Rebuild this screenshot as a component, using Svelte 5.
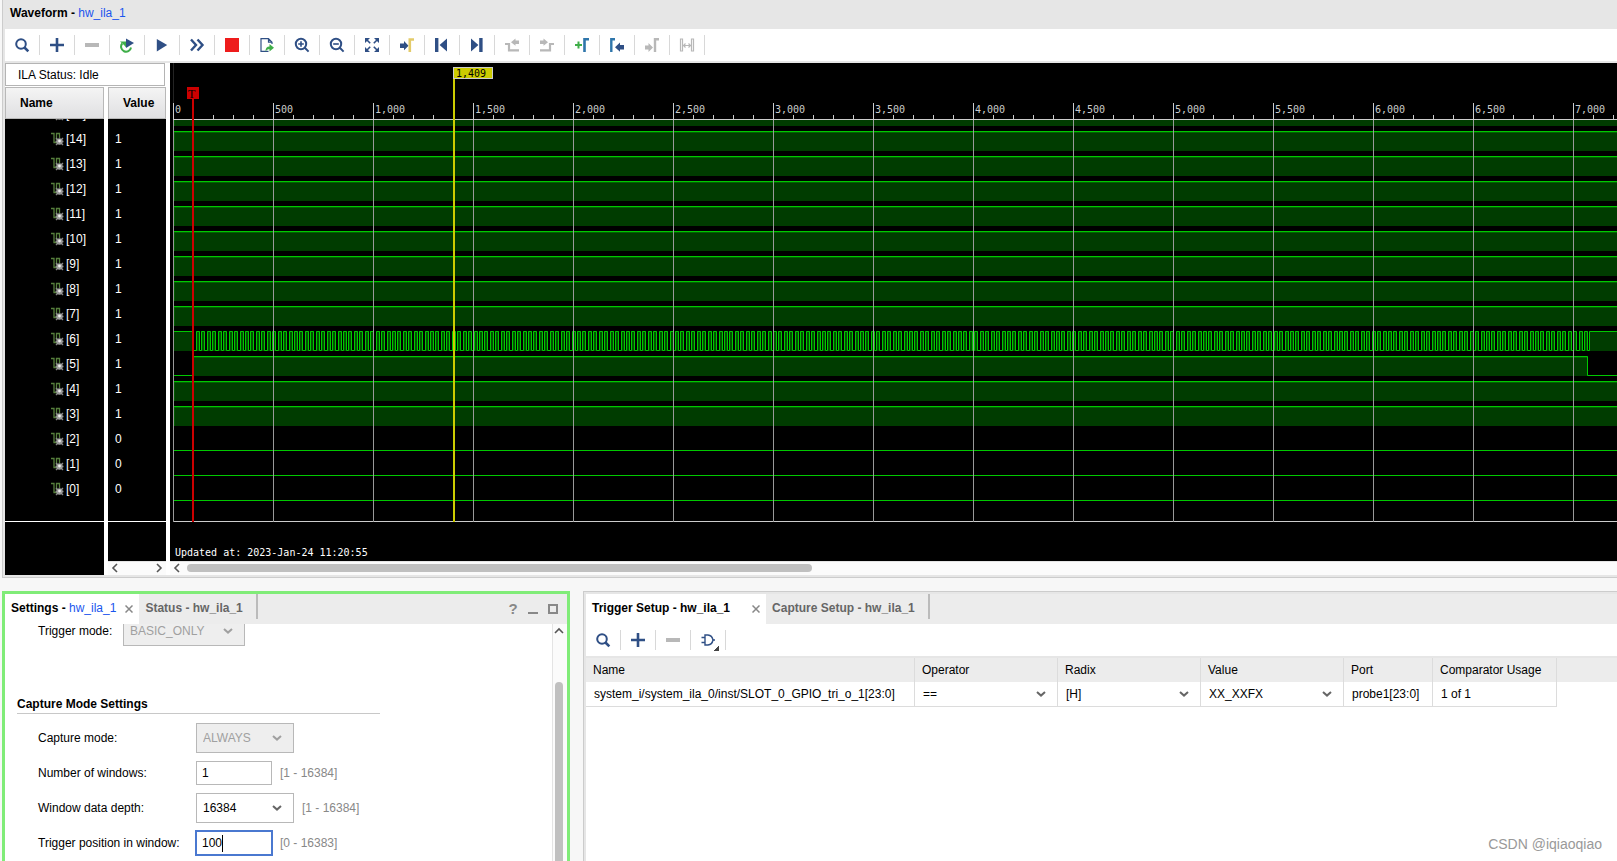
<script>
  import { onMount } from 'svelte';

  const NAVY = '#2f4f85';
  const GREEN = '#3fae49';
  const OFF = '#b8b8b8';

  // each icon is a list of paths on a 16x16 grid, f = fill, s = stroke, w = stroke width
  const icons = {
    search: [
      { d: 'M7 2.2a4.8 4.8 0 1 0 0 9.6a4.8 4.8 0 1 0 0-9.6z', s: NAVY, w: 2 },
      { d: 'M10.5 10.5L14.3 14.3', s: NAVY, w: 2.6 }
    ],
    add: [{ d: 'M8 1v14M1 8h14', s: NAVY, w: 2.6 }],
    remove: [{ d: 'M1 6h14v4H1z', f: OFF }],
    rerun: [
      { d: 'M3.2 6.5A5 5 0 1 0 12 10.5', s: GREEN, w: 2 },
      { d: 'M1 4.5h6v6L5 8z', f: GREEN },
      { d: 'M7 1.5L15 6L7 11z', f: NAVY }
    ],
    play: [{ d: 'M2.8 2L13.2 8L2.8 14.4z', f: NAVY }],
    forward: [{ d: 'M2 2.5L7 8L2 13.5M8.5 2.5L13.5 8L8.5 13.5', s: NAVY, w: 2.4 }],
    stop: [{ d: 'M1 1h14v14H1z', f: '#ee1c1c' }],
    export: [
      { d: 'M9.5 14.3H2V1.7h7.5l3.5 3.5V7M9.5 1.7v3.5H13', s: NAVY, w: 1.2 },
      { d: 'M6.5 14.5c0-3.4 1.3-5 4-5V7l4.5 3.8l-4.5 3.7v-2.3c-1.8 0-2.8.6-4 2.3z', f: GREEN }
    ],
    zoomIn: [
      { d: 'M7 1.8a5.2 5.2 0 1 0 0 10.4a5.2 5.2 0 1 0 0-10.4zM10.8 10.8L14.6 14.6', s: NAVY, w: 2 },
      { d: 'M7 4.2v5.6M4.2 7h5.6', s: NAVY, w: 1.6 }
    ],
    zoomOut: [
      { d: 'M7 1.8a5.2 5.2 0 1 0 0 10.4a5.2 5.2 0 1 0 0-10.4zM10.8 10.8L14.6 14.6', s: NAVY, w: 2 },
      { d: 'M4.2 7h5.6', s: NAVY, w: 1.6 }
    ],
    fit: [
      { d: 'M1 1h5L1 6zM15 1v5l-5-5zM1 15v-5l5 5zM15 15h-5l5-5z', f: NAVY },
      { d: 'M3 3l3.2 3.2M13 3L9.8 6.2M3 13l3.2-3.2M13 13L9.8 9.8', s: NAVY, w: 1.6 }
    ],
    cursor: [
      { d: 'M1 6.5h4V4l4.5 4.7L5 13.3V11H1z', f: NAVY },
      { d: 'M10.8 15V2.5H15', s: '#e3cb6a', w: 2.6 }
    ],
    first: [{ d: 'M1 1h3.4v14H1zM13 1.5v13L5.6 8z', f: NAVY }],
    last: [{ d: 'M10.2 1h3.4v14h-3.4zM2 1.5v13L9.4 8z', f: NAVY }],
    prevEdge: [
      { d: 'M1 7h4v6.3h10', s: OFF, w: 2.2 },
      { d: 'M15 3.5h-3.5V1.5L7 5.2l4.5 3.6V7H15z', f: OFF }
    ],
    nextEdge: [
      { d: 'M15 7h-4v6.3H1', s: OFF, w: 2.2 },
      { d: 'M1 3.5h3.5V1.5L9 5.2L4.5 8.8V7H1z', f: OFF }
    ],
    addMarker: [
      { d: 'M4.5 4.5v7M1 8h7', s: GREEN, w: 2 },
      { d: 'M10.5 15V2.3H15', s: '#2f76ab', w: 2.6 }
    ],
    prevMarker: [
      { d: 'M2.3 15V2.3H6', s: '#2f76ab', w: 2.4 },
      { d: 'M15 8h-4V5.4L6 10.2l5 4.6V12.4h4z', f: NAVY }
    ],
    nextMarker: [
      { d: 'M1 8.5h3.5V6L9 10.5L4.5 15v-2.5H1z', f: OFF },
      { d: 'M11 15V2.3H15', s: OFF, w: 2.4 }
    ],
    swap: [
      { d: 'M1.5 2h2v12h-2zM12.5 2h2v12h-2z', s: OFF, w: 1.2 },
      { d: 'M4.5 8.5h7M6.5 6.5l-2 2l2 2M9.5 6.5l2 2l-2 2', s: OFF, w: 1.2 }
    ],
    gate: [
      { d: 'M5 3h3c3 .3 4.5 2.5 5 5c-.5 2.5-2 4.7-5 5H5z', s: NAVY, w: 1.4 },
      { d: 'M1.5 5.5H5M1.5 10.500H5M13 8h2', s: NAVY, w: 1.4 }
    ]
  };

  const waveTools = [
    ['search', 'Search'], ['add', 'Add probes'], ['remove', 'Remove'], ['rerun', 'Auto re-trigger'],
    ['play', 'Run trigger'], ['forward', 'Run trigger immediate'], ['stop', 'Stop trigger'],
    ['export', 'Export ILA data'], ['zoomIn', 'Zoom in'], ['zoomOut', 'Zoom out'], ['fit', 'Zoom fit'],
    ['cursor', 'Go to cursor'], ['first', 'Go to first'], ['last', 'Go to last'],
    ['prevEdge', 'Previous transition', true], ['nextEdge', 'Next transition', true],
    ['addMarker', 'Add marker'], ['prevMarker', 'Previous marker'],
    ['nextMarker', 'Next marker', true], ['swap', 'Swap cursors', true]
  ];
  const triggerTools = [['search', 'Search'], ['add', 'Add probe'], ['remove', 'Remove probe'], ['gate', 'Trigger condition']];

  const signals = Array.from({ length: 16 }, (_, i) => {
    const bit = 15 - i;
    return { bit, value: bit > 2 ? 1 : 0, top: 43 + i * 25 };
  });
  const solid = signals.filter((s) => s.value && s.bit !== 6 && s.bit !== 5);
  const zero = signals.filter((s) => !s.value);

  // ruler: 500 samples per 100px, zero sits at x = 3
  let plotWidth = $state(0);
  let majors = $derived(
    Array.from({ length: Math.ceil(plotWidth / 100) }, (_, i) => ({
      x: 3 + i * 100,
      label: (i * 500).toLocaleString('en-US')
    }))
  );
  let minors = $derived(Array.from({ length: Math.ceil(plotWidth / 20) }, (_, i) => 3 + i * 20));

  const pulses = Array.from({ length: 256 }, (_, i) => Math.round(26 + i * 5.443));
  const clock =
    'M3.5 268.5H23.5V287.5' +
    pulses.map((x) => `H${x + 0.5}V268.5H${x + 3.5}V287.5`).join('') +
    'H1419.5V268.5H5000';

  let captureWindows = $state('1');
  let position = $state('100');
  let operator = $state('==');
  let radix = $state('[H]');
  let value = $state('XX_XXFX');
  let positionInput;

  onMount(() => positionInput.focus());
</script>

{#snippet icon(name)}
  <svg class="icon" viewBox="0 0 16 16" aria-hidden="true">
    {#each icons[name] as p}
      <path d={p.d} fill={p.f ?? 'none'} stroke={p.s ?? 'none'} stroke-width={p.w ?? 0} />
    {/each}
  </svg>
{/snippet}

{#snippet toolbar(tools)}
  <div class="toolbar">
    {#each tools as [name, label, disabled]}
      <button class="tool" aria-label={label} {disabled}>
        {@render icon(name)}
        {#if name === 'gate'}<i class="corner"></i>{/if}
      </button>
    {/each}
  </div>
{/snippet}

{#snippet chevron()}
  <svg class="chevron" viewBox="0 0 10 6" aria-hidden="true">
    <path d="M1 1l4 3.6l4-3.6" fill="none" stroke="currentColor" stroke-width="2" />
  </svg>
{/snippet}

{#snippet arrow(d)}
  <svg class="arrow" viewBox="0 0 10 10" aria-hidden="true">
    <path {d} fill="none" stroke="#555" stroke-width="1.6" />
  </svg>
{/snippet}

{#snippet close(label)}
  <button class="close" aria-label={label}>
    <svg viewBox="0 0 8 8" aria-hidden="true"><path d="M.5.5l7 7M7.5.5l-7 7" stroke="#888" stroke-width="1.5" /></svg>
  </button>
{/snippet}

<main class="app">
  <section class="panel waveform">
    <h1>Waveform - <a href="#ila">hw_ila_1</a></h1>
    {@render toolbar(waveTools)}

    <div class="viewer">
      <div class="side">
        <div class="status">ILA Status: Idle</div>
        <div class="col">
          <div class="col-head">Name</div>
          <ul class="rows">
            {#each signals as s}
              <li class="name">
                <svg width="14" height="14" viewBox="0 0 14 14" aria-hidden="true">
                  <path d="M1 1.5h3v9h3M6.500 8V1.500h3V6" fill="none" stroke="#567f3c" stroke-width="1.300" />
                  <path d="M6 6l7 7M13 6l-7 7M5.500 9.500h8" stroke="#888" stroke-width="1.400" />
                  <circle cx="9.5" cy="9.5" r="3.2" fill="#9a9a9a" />
                  <circle cx="9.500" cy="9" r="1.400" fill="#eee" />
                </svg>
                [{s.bit}]
              </li>
            {/each}
          </ul>
          <div class="below"></div>
        </div>
        <div class="col">
          <div class="col-head">Value</div>
          <ul class="rows">
            {#each signals as s}
              <li class="value">{s.value}</li>
            {/each}
          </ul>
          <div class="below"></div>
          <div class="hscroll ends">
            {@render arrow('M7 1L3 5l4 4')}
            {@render arrow('M3 1l4 4l-4 4')}
          </div>
        </div>
      </div>

      <div class="plot" bind:clientWidth={plotWidth}>
        <div class="canvas">
          <svg class="wave" role="img" aria-label="Captured waveform">
            <rect x="3" y="0" width="1" height="40" fill="#242424" />
            {#each solid as s}
              <rect x="3" y={s.top} width="100%" height="20" fill="#003c00" />
              <rect x="4" y={s.top} width="1" height="20" fill="#005a00" />
              <rect x="3" y={s.top + 1} width="100%" height="1" fill="#006400" />
              <rect x="3" y={s.top} width="100%" height="1" fill="#00c800" />
            {/each}
            {#each zero as s}
              <rect x="3" y={s.top + 19} width="100%" height="1" fill="#00c800" />
            {/each}

            <rect x="3" y="268" width="20" height="20" fill="#003c00" />
            {#each pulses as x}
              <rect {x} y="268" width="4" height="20" fill="#005200" />
            {/each}
            <rect x="1419" y="268" width="100%" height="20" fill="#003c00" />
            <path d={clock} fill="none" stroke="#00c800" />

            <rect x="24" y="293" width="1394" height="20" fill="#003c00" />
            <rect x="24" y="294" width="1394" height="1" fill="#006400" />
            <path d="M3.5 312.5H23.5V293.5H1417.5V312.5H5000" fill="none" stroke="#00c800" />

            <rect x="0" y="0" width="3" height="100%" />
            <rect x="3" y="43" width="100%" height="13" />
            <rect x="3" y="56" width="100%" height="1" fill="#ccc" />
            <rect x="3" y="458" width="100%" height="1" fill="#ccc" />
            {#each minors as x}
              <rect {x} y="52" width="1" height="4" fill="#ccc" />
            {/each}
            {#each majors as m}
              <rect x={m.x} y="40" width="1" height="16" fill="#ccc" />
              <rect x={m.x} y="57" width="1" height="402" fill="#999" />
              <text x={m.x + 2} y="50" fill="#ccc">{m.label}</text>
            {/each}

            <rect x="22" y="36" width="2" height="423" fill="#c00" />
            <rect x="17" y="24" width="12" height="12" fill="#c00" />
            <text class="flag" x="18" y="35">T</text>

            <rect x="283" y="16" width="2" height="443" fill="#cc0" />
            <rect x="283.5" y="4.5" width="39" height="11" fill="#cc0" stroke="#ccc" />
            <text x="286" y="14">1,409</text>
          </svg>
          <p class="updated">Updated at: 2023-Jan-24 11:20:55</p>
        </div>
        <div class="hscroll">
          {@render arrow('M7 1L3 5l4 4')}
          <div class="thumb"></div>
          <div class="rest"></div>
        </div>
      </div>
    </div>
  </section>

  <div class="bottom">
    <section class="panel settings">
      <div class="tabs">
        <div class="tab active">
          <button>Settings - <span class="link">hw_ila_1</span></button>
          {@render close('Close settings')}
        </div>
        <div class="tab"><button>Status - hw_ila_1</button></div>
        <div class="window">
          <button class="help" aria-label="Help">?</button>
          <button aria-label="Minimize"><i class="min"></i></button>
          <button aria-label="Maximize"><i class="max"></i></button>
        </div>
      </div>

      <div class="body">
        <form>
          <div class="field clipped">
            <label for="mode">Trigger mode:</label>
            <span class="pick wide">
              <select id="mode" disabled><option>BASIC_ONLY</option></select>
              {@render chevron()}
            </span>
          </div>
          <h2>Capture Mode Settings</h2>
          <div class="field">
            <label for="capture">Capture mode:</label>
            <span class="pick">
              <select id="capture" disabled><option>ALWAYS</option></select>
              {@render chevron()}
            </span>
          </div>
          <div class="field">
            <label for="windows">Number of windows:</label>
            <input id="windows" type="text" bind:value={captureWindows} />
            <span class="hint">[1 - 16384]</span>
          </div>
          <div class="field">
            <label for="depth">Window data depth:</label>
            <span class="pick">
              <select id="depth"><option>16384</option><option>8192</option><option>4096</option></select>
              {@render chevron()}
            </span>
            <span class="hint">[1 - 16384]</span>
          </div>
          <div class="field">
            <label for="position">Trigger position in window:</label>
            <span class="focused">
              <input id="position" type="text" bind:value={position} bind:this={positionInput} />
              <i class="caret"></i>
            </span>
            <span class="hint">[0 - 16383]</span>
          </div>
        </form>
        <div class="vscroll">
          {@render arrow('M1 7l4-4l4 4')}
          <div class="vthumb"></div>
        </div>
      </div>
    </section>

    <section class="panel trigger">
      <div class="tabs">
        <div class="tab active spaced">
          <button>Trigger Setup - hw_ila_1</button>
          {@render close('Close trigger setup')}
        </div>
        <div class="tab"><button>Capture Setup - hw_ila_1</button></div>
      </div>
      {@render toolbar(triggerTools)}
      <div class="sheet">
        <table>
          <colgroup>
            <col class="c-name" /><col class="c-pick" /><col class="c-pick" /><col class="c-pick" />
            <col class="c-port" /><col class="c-usage" /><col />
          </colgroup>
          <thead>
            <tr>
              <th>Name</th>
              <th>Operator</th>
              <th>Radix</th>
              <th>Value</th>
              <th>Port</th>
              <th>Comparator Usage</th>
              <th></th>
            </tr>
          </thead>
          <tbody>
            <tr>
              <td>system_i/system_ila_0/inst/SLOT_0_GPIO_tri_o_1[23:0]</td>
              <td>
                <span class="pick cell">
                  <select aria-label="Operator" bind:value={operator}><option>==</option><option>!=</option></select>
                  {@render chevron()}
                </span>
              </td>
              <td>
                <span class="pick cell">
                  <select aria-label="Radix" bind:value={radix}><option>[H]</option><option>[B]</option></select>
                  {@render chevron()}
                </span>
              </td>
              <td>
                <span class="pick cell">
                  <select aria-label="Value" bind:value><option>XX_XXFX</option></select>
                  {@render chevron()}
                </span>
              </td>
              <td>probe1[23:0]</td>
              <td>1 of 1</td>
              <td class="blank"></td>
            </tr>
          </tbody>
        </table>
      </div>
      <p class="watermark">CSDN @iqiaoqiao</p>
    </section>
  </div>
</main>

<style>
  :global(body) {
    background: #f7f7f7;
    overflow: hidden;
  }

  .app, .app :global(*) {
    box-sizing: border-box;
  }

  .app {
    display: flex;
    flex-direction: column;
    gap: 13px;
    min-height: 100vh;
    padding-left: 2px;
    font: 12px/16px "Liberation Sans", Arial, sans-serif;
    color: #000;
  }

  h1, h2, p, ul {
    margin: 0;
    padding: 0;
    font-size: 12px;
  }

  button, input, select {
    font: inherit;
    color: inherit;
    margin: 0;
  }

  button {
    border: 0;
    padding: 0;
    background: none;
  }

  .panel {
    background: #e6e6e6;
    border: solid #ccc;
    border-width: 1px 0 0 1px;
    padding: 2px 0 0 2px;
    min-width: 0;
  }

  .waveform {
    border-width: 0 0 1px 1px;
    padding: 0 0 2px 2px;
  }

  h1 {
    height: 29px;
    padding: 5px;
  }

  h1 a, .link {
    color: #1a55ee;
    font-weight: 400;
    text-decoration: none;
  }

  .toolbar {
    display: flex;
    align-items: center;
    height: 32px;
    margin-bottom: 2px;
    background: #fff;
  }

  .tool {
    position: relative;
    display: flex;
    align-items: center;
    justify-content: center;
    width: 35px;
    height: 20px;
    border-right: 1px solid #d8d8d8;
  }

  .icon {
    width: 16px;
    height: 16px;
  }

  .corner {
    position: absolute;
    right: 6px;
    bottom: -1px;
    width: 5px;
    height: 5px;
    background: linear-gradient(135deg, transparent 50%, #444 50%);
  }

  .viewer {
    display: flex;
  }

  .side {
    display: grid;
    grid-template-columns: 99px 58px;
    grid-template-rows: 23px 1fr;
    column-gap: 4px;
    row-gap: 1px;
    padding-right: 4px;
    background: #fff;
  }

  .status {
    grid-column: 1 / 3;
    margin-right: 1px;
    padding: 3px 12px;
    border: 1px solid #b4b4b4;
  }

  .col {
    display: flex;
    flex-direction: column;
    background: #000;
    color: #fff;
  }

  .col-head {
    height: 32px;
    padding: 7px 14px;
    border: 1px solid #b8b8b8;
    background: linear-gradient(#f4f4f4, #e0e0e2);
    color: #000;
    font-weight: 700;
  }

  .rows {
    height: 403px;
    overflow: hidden;
    border-bottom: 1px solid #fff;
    list-style: none;
  }

  .rows li {
    display: flex;
    align-items: center;
    gap: 2px;
    height: 25px;
  }

  .rows li:first-child {
    margin-top: -18px;
  }

  .rows .name {
    padding-left: 45px;
  }

  .rows .value {
    padding-left: 7px;
  }

  .below {
    flex: 1;
  }

  .plot {
    flex: 1;
    min-width: 0;
  }

  .canvas {
    position: relative;
    height: 498px;
    overflow: hidden;
    background: #000;
  }

  .wave {
    display: block;
    width: 100%;
    height: 480px;
  }

  .wave text, .updated {
    font: 10px/12px "DejaVu Sans Mono", monospace;
  }

  .wave .flag {
    font-family: "Liberation Serif", serif;
    font-size: 12px;
  }

  .updated {
    position: absolute;
    left: 5px;
    bottom: 2px;
    color: #fff;
  }

  .hscroll {
    display: flex;
    align-items: center;
    height: 14px;
    padding: 0 2px 2px;
    border-top: 1px solid #e4e4e4;
    background: #fbfbfb;
  }

  .ends {
    justify-content: space-between;
  }

  .arrow {
    flex: none;
    width: 10px;
    height: 10px;
  }

  .thumb {
    flex: 625;
    height: 8px;
    margin-left: 5px;
    border-radius: 4px;
    background: #c0c0c0;
  }

  .rest {
    flex: 803;
  }

  .bottom {
    flex: 1;
    display: grid;
    grid-template-columns: 568fr 1034fr;
    gap: 13px;
  }

  .settings {
    display: flex;
    flex-direction: column;
    border: solid #80ec78;
    border-width: 3px 3px 0;
    padding: 0;
  }

  .tabs {
    display: flex;
    height: 30px;
    background: #ececec;
  }

  .tab {
    display: flex;
    align-items: center;
    gap: 9px;
    height: 25px;
    padding: 3px 13px 0 6px;
    border-right: 2px solid #bbb;
    color: #666;
    white-space: nowrap;
  }

  .tab button {
    font-weight: 700;
  }

  .tab.active {
    height: 30px;
    padding: 0 6px 2px;
    border: 0;
    background: #fff;
    color: #000;
  }

  .tab.spaced {
    gap: 22px;
  }

  .close {
    display: flex;
    width: 8px;
    height: 8px;
    margin-top: 2px;
  }

  .window {
    display: flex;
    align-items: center;
    gap: 10px;
    margin-left: auto;
    padding-right: 9px;
    color: #888;
  }

  .window button {
    width: 10px;
    height: 16px;
  }

  .window .help {
    font-size: 15px;
    font-weight: 700;
  }

  .window i {
    display: block;
    width: 10px;
    height: 10px;
  }

  .min {
    border-bottom: 2px solid #888;
  }

  .max {
    border: 2px solid #888;
  }

  .body {
    flex: 1;
    display: flex;
    background: #fff;
    overflow: hidden;
  }

  form {
    flex: 1;
    padding-left: 12px;
  }

  .field {
    display: grid;
    grid-template-columns: 158px auto auto;
    justify-content: start;
    align-items: center;
    height: 35px;
    padding-left: 21px;
  }

  .clipped {
    grid-template-columns: 85px auto;
    height: 30px;
    margin-top: -8px;
  }

  h2 {
    width: 363px;
    margin: 50px 0 6px;
    padding-bottom: 1px;
    border-bottom: 1px solid #c8c8c8;
  }

  input {
    width: 76px;
    height: 24px;
    padding: 0 5px;
    border: 1px solid #b8b8b8;
    border-radius: 0;
    background: #fff;
    outline: 0;
  }

  .focused {
    position: relative;
  }

  .focused input {
    display: block;
    outline: 2px solid #4a78d0;
    outline-offset: -1px;
    caret-color: transparent;
  }

  .caret {
    position: absolute;
    left: 26px;
    top: 4px;
    width: 1px;
    height: 17px;
    background: #000;
  }

  .hint {
    padding-left: 8px;
    color: #888;
  }

  .pick {
    position: relative;
    display: block;
    width: 98px;
  }

  .pick.wide {
    width: 122px;
  }

  .pick.cell {
    width: 100%;
  }

  select {
    display: block;
    appearance: none;
    width: 100%;
    height: 30px;
    padding: 0 6px;
    border: 1px solid #b8b8b8;
    border-radius: 0;
    background: #fff;
  }

  select:disabled {
    background: #eee;
    color: #a0a0a0;
    opacity: 1;
  }

  .chevron {
    position: absolute;
    right: 12px;
    top: calc(50% - 3px);
    width: 10px;
    height: 6px;
    color: #666;
    pointer-events: none;
  }

  select:disabled + .chevron {
    color: #a0a0a0;
  }

  .cell select {
    height: 24px;
    padding: 0 8px;
    border: 0;
  }

  .cell .chevron {
    right: 11px;
  }

  .vscroll {
    display: flex;
    flex-direction: column;
    align-items: center;
    width: 15px;
    padding: 2px 2px 0 0;
    border-left: 1px solid #e4e4e4;
    background: #fbfbfb;
  }

  .vthumb {
    flex: 1;
    width: 8px;
    margin-top: 46px;
    border-radius: 4px 4px 0 0;
    background: #c0c0c0;
  }

  .trigger {
    display: flex;
    flex-direction: column;
  }

  .sheet {
    flex: 1;
    background: #fff;
  }

  table {
    width: 100%;
    table-layout: fixed;
    border-collapse: separate;
    border-spacing: 0;
  }

  .c-name {
    width: 329px;
  }

  .c-pick {
    width: 143px;
  }

  .c-port {
    width: 89px;
  }

  .c-usage {
    width: 124px;
  }

  th, td {
    height: 24px;
    padding: 0 8px;
    border-right: 1px solid #dcdcdc;
    font-weight: 400;
    text-align: left;
    white-space: nowrap;
  }

  th {
    padding: 0 7px;
    background: #ececec;
  }

  td {
    height: 25px;
    border-bottom: 1px solid #dcdcdc;
  }

  td:has(.cell) {
    padding: 0;
  }

  th:last-child, .blank {
    border: 0;
  }

  .watermark {
    position: absolute;
    right: 15px;
    bottom: 8px;
    color: #999;
    font-size: 14px;
    line-height: 18px;
  }
</style>
